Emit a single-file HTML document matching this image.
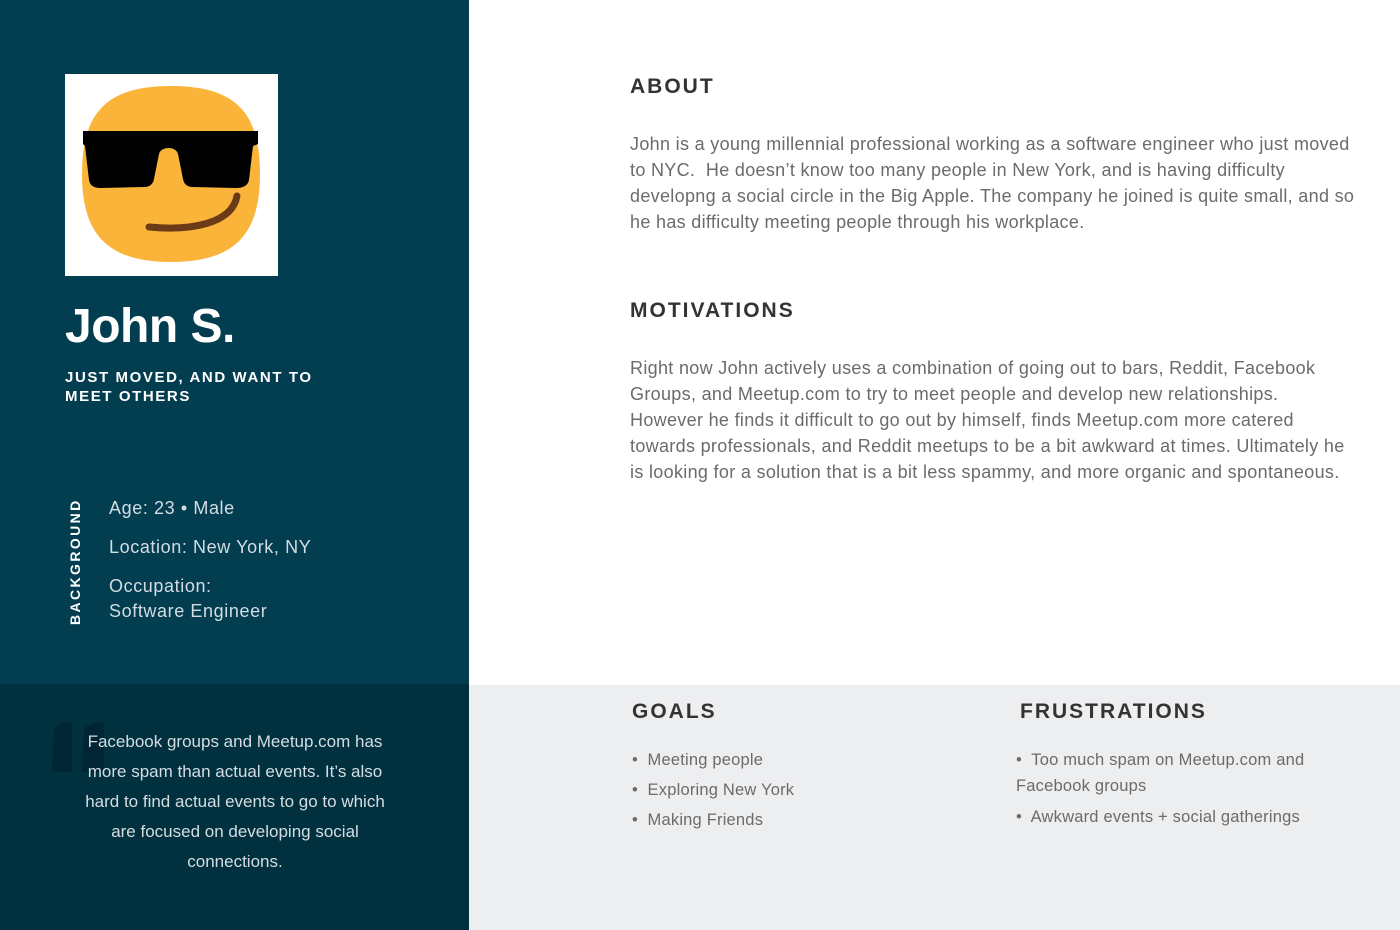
<!DOCTYPE html>
<html><head><meta charset="utf-8"><style>
*{margin:0;padding:0;box-sizing:border-box}
body{width:1400px;height:930px;position:relative;overflow:hidden;background:#fff;font-family:"Liberation Sans",sans-serif}
.abs{position:absolute}
.left{left:0;top:0;width:469px;height:684px;background:#023d50}
.quote{left:0;top:684px;width:469px;height:246px;background:#01303f}
.gray{left:469px;top:685px;width:931px;height:245px;background:#edeef0}
h2{position:absolute;font-size:21px;font-weight:bold;letter-spacing:2px;color:#333}
.p{position:absolute;font-size:18px;letter-spacing:0.32px;line-height:26px;color:#6b6b6b;white-space:nowrap}
.li{position:absolute;font-size:16.5px;letter-spacing:0.2px;color:#6b6b6b;white-space:nowrap;line-height:30px}
</style></head><body>
<div class="abs left"></div>
<div class="abs quote"></div>
<div class="abs gray"></div>
<div class="abs" style="left:65px;top:74px;width:213px;height:202px;background:#fff">
<svg width="213" height="202" viewBox="0 0 213 202">
<path d="M106 12 C172 12 195 40 195 100 C195 160 170 188 106 188 C42 188 17 160 17 100 C17 40 40 12 106 12Z" fill="#fbb43a"/>
<path d="M18 57 L193 57 L193 70 L188 72 L184 106 C183 111 179 114 171 114 L128 113 C122 113 119 110 118 105 L113 80 C111 72 96 72 94 80 L89 105 C88 110 85 113 79 113 L36 114 C28 114 25 111 24 106 L20 72 L18 70Z" fill="#000"/>
<path d="M84 153 C125 157 167 150 172 122" stroke="#6b3a16" stroke-width="7" fill="none" stroke-linecap="round"/>
</svg></div>
<div class="abs" style="left:65px;top:299px;font-size:48px;font-weight:bold;color:#fff;letter-spacing:-0.5px">John S.</div>
<div class="abs" style="left:65px;top:368px;font-size:15px;font-weight:bold;color:#fff;letter-spacing:1.6px;line-height:19px">JUST MOVED, AND WANT TO<br>MEET OTHERS</div>
<div class="abs" style="left:67px;top:625px;transform:rotate(-90deg);transform-origin:0 0;font-size:14px;font-weight:bold;color:#fff;letter-spacing:2.4px;width:130px;height:18px">BACKGROUND</div>
<div class="abs" style="left:109px;top:496px;font-size:18px;letter-spacing:0.6px;color:#d4dde2;line-height:25px">Age: 23 • Male</div>
<div class="abs" style="left:109px;top:535px;font-size:18px;letter-spacing:0.6px;color:#d4dde2;line-height:25px">Location: New York, NY</div>
<div class="abs" style="left:109px;top:574px;font-size:18px;letter-spacing:0.6px;color:#d4dde2;line-height:25px">Occupation:<br>Software Engineer</div>
<div class="abs" style="left:50px;top:722px;width:58px;height:50px">
<svg width="58" height="50" viewBox="0 0 58 50"><path d="M4 8 C6 2 14 0 22 1 L22 50 L2 50 Z M34 8 C36 2 44 0 54 1 L54 50 L32 50 Z" fill="#012633"/></svg></div>
<div class="abs" style="left:35px;top:727px;width:400px;text-align:center;font-size:17px;line-height:30px;color:#d4dde2">Facebook groups and Meetup.com has<br>more spam than actual events. It’s also<br>hard to find actual events to go to which<br>are focused on developing social<br>connections.</div>
<h2 style="left:630px;top:75px">ABOUT</h2>
<div class="p" style="left:630px;top:131px">John is a young millennial professional working as a software engineer who just moved<br>to NYC.&nbsp; He doesn’t know too many people in New York, and is having difficulty<br>developng a social circle in the Big Apple. The company he joined is quite small, and so<br>he has difficulty meeting people through his workplace.</div>
<h2 style="left:630px;top:299px">MOTIVATIONS</h2>
<div class="p" style="left:630px;top:355px">Right now John actively uses a combination of going out to bars, Reddit, Facebook<br>Groups, and Meetup.com to try to meet people and develop new relationships.<br>However he finds it difficult to go out by himself, finds Meetup.com more catered<br>towards professionals, and Reddit meetups to be a bit awkward at times. Ultimately he<br>is looking for a solution that is a bit less spammy, and more organic and spontaneous.</div>
<h2 style="left:632px;top:700px">GOALS</h2>
<div class="li" style="left:632px;top:745px">•&nbsp; Meeting people<br>•&nbsp; Exploring New York<br>•&nbsp; Making Friends</div>
<h2 style="left:1020px;top:700px">FRUSTRATIONS</h2>
<div class="li" style="left:1016px;top:747px;line-height:26px">•&nbsp; Too much spam on Meetup.com and<br>Facebook groups</div>
<div class="li" style="left:1016px;top:802px;line-height:30px">•&nbsp; Awkward events + social gatherings</div>
</body></html>
